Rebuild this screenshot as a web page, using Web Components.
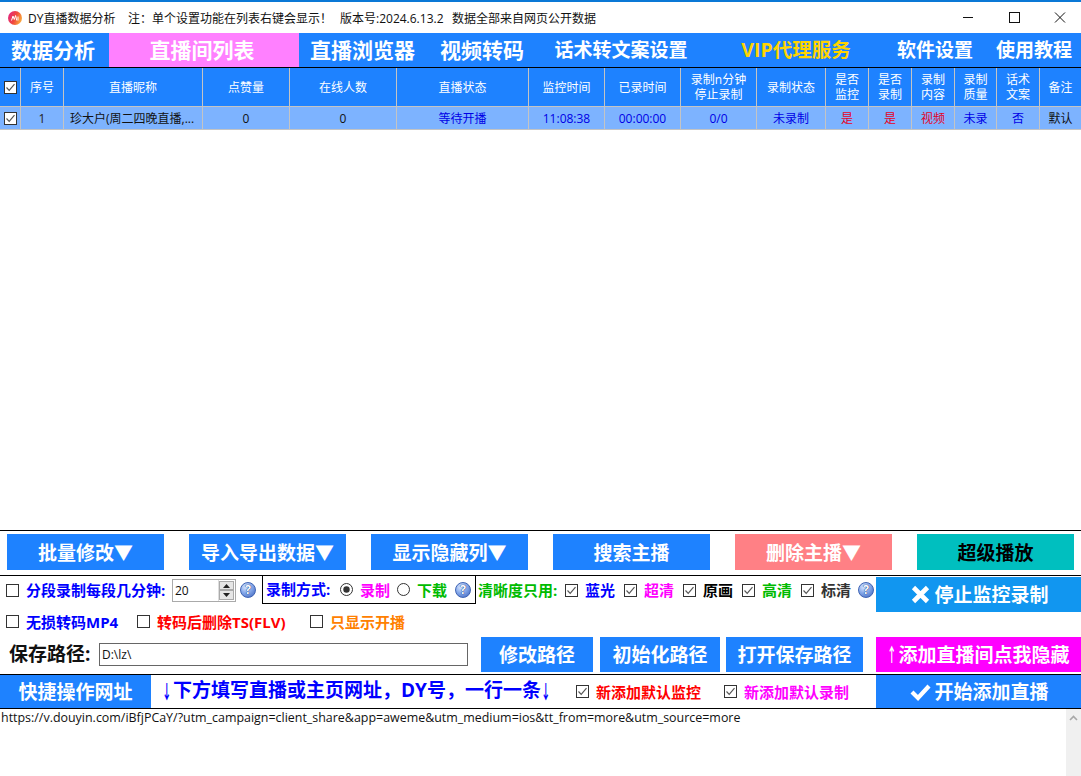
<!DOCTYPE html>
<html><head><meta charset="utf-8">
<style>
html,body{margin:0;padding:0;background:#fff}
body{width:1081px;height:776px;overflow:hidden;font-family:'Open Sans','Noto Sans CJK SC',sans-serif;font-size:12px;color:#111}
</style></head><body>
<dy-app></dy-app>
<script>
const FONT="'Open Sans','Noto Sans CJK SC',sans-serif";
function def(name,css,html){
  customElements.define(name,class extends HTMLElement{
    constructor(){super();const s=this.attachShadow({mode:'open'});
      s.innerHTML='<style>'+css+'</style>'+(typeof html==='function'?html(this):html);}
  });
}

def('dy-titlebar',`
:host{display:flex;align-items:center;border-top:2px solid #0a78d6;box-sizing:border-box;height:33px;background:#fff;font:12px ${FONT};color:#111;white-space:nowrap}
.logo{margin-left:8px;width:14px;height:14px;margin-right:6px;flex:none}
.a{width:100px}.b{width:212px}.c{width:112px}
.ctl{margin-left:auto;display:flex}
.ctl svg{display:block;width:46px;height:31px}
`,`
<svg class="logo" viewBox="0 0 14 14"><defs><linearGradient id="g" x1="0" y1="0" x2="1" y2="0.4"><stop offset="0" stop-color="#e0208c"/><stop offset=".6" stop-color="#f0483c"/><stop offset="1" stop-color="#f9a03c"/></linearGradient></defs><circle cx="7" cy="7" r="7" fill="url(#g)"/><path d="M3.5 9.5 L5 5 L6.3 8.5 L7.6 4.5 L8.8 9.5 M10 5.5 V9.5" stroke="#fff" stroke-width="1" fill="none"/></svg>
<span class="a">DY直播数据分析</span><span class="b">注：单个设置功能在列表右键会显示！</span><span class="c">版本号:2024.6.13.2</span><span>数据全部来自网页公开数据</span>
<div class="ctl">
<svg viewBox="0 0 46 31"><path d="M20 15.5H30" stroke="#111" stroke-width="1"/></svg>
<svg viewBox="0 0 46 31"><rect x="20.5" y="10.5" width="10" height="10" fill="none" stroke="#111"/></svg>
<svg viewBox="0 0 46 31"><path d="M20 10.5L30 20.5M30 10.5L20 20.5" stroke="#111" stroke-width="1" fill="none"/></svg>
</div>`);

def('dy-tabs',`:host{display:flex;height:34px;background:#1e82ff;border-bottom:1px solid #000}`,`<slot></slot>`);
def('dy-tab',`
:host{display:flex;align-items:center;justify-content:center;height:34px;font:bold var(--fs,20px)/1 ${FONT};color:var(--tfg,#fff);background:var(--tbg,transparent);white-space:nowrap;flex:none;box-sizing:border-box}
`,`<slot></slot>`);

const COLS='21px 43px 139px 87px 107px 132px 76px 76px 76px 69px 43px 43px 43px 42px 43px 41px';
def('dy-table',`:host{display:block}`,`<slot></slot>`);
def('dy-row',`
:host{display:grid;grid-template-columns:${COLS};background:var(--rowbg);height:var(--rowh);box-sizing:border-box;border-bottom:1px solid #c4c4c4}
`,`<slot></slot>`);
def('dy-cell',`
:host{display:flex;align-items:center;justify-content:center;text-align:center;font:12px/15px ${FONT};color:var(--fg,inherit);border-right:1px solid #c4c4c4;box-sizing:border-box;overflow:hidden;white-space:nowrap}
:host([left]){justify-content:flex-start;padding-left:6px}
:host(:last-child){border-right:0}
`,`<slot></slot>`);

def('dy-check',`
:host{display:inline-flex;align-items:center;flex:none;font:bold 15px/18px ${FONT};color:var(--fg,#111);white-space:nowrap}
svg{width:13px;height:13px;flex:none;display:block}
.t{margin-left:var(--lg,7px);width:var(--lw,auto)}
`,h=>{
  const on=h.hasAttribute('checked');
  return `<svg viewBox="0 0 13 13"><rect x=".5" y=".5" width="12" height="12" fill="#fff" stroke="#333"/>${on?'<path d="M2.5 6.5L5.2 9.3L10.5 3.2" fill="none" stroke="#555" stroke-width="1.2"/>':''}</svg><span class="t"><slot></slot></span>`;
});
def('dy-radio',`
:host{display:inline-flex;align-items:center;flex:none;font:bold 15px/18px ${FONT};color:var(--fg,#111);white-space:nowrap}
svg{width:13px;height:13px;flex:none;display:block}
.t{margin-left:7px}
`,h=>`<svg viewBox="0 0 13 13"><circle cx="6.5" cy="6.5" r="6" fill="#fff" stroke="#333"/>${h.hasAttribute('checked')?'<circle cx="6.5" cy="6.5" r="3.2" fill="#333"/>':''}</svg><span class="t"><slot></slot></span>`);

def('dy-help',`
:host{display:inline-flex;flex:none;width:16px;height:16px}
.i{width:16px;height:16px;border-radius:50%;border:1px solid #3f64b4;box-sizing:border-box;background:radial-gradient(circle at 35% 28%,#dfeaff 0,#86a9ea 45%,#3a60ba 100%);color:#fff;font:bold 12px/14px ${FONT};text-align:center;text-shadow:0 0 1px #12357f,0 0 1px #12357f}
`,`<div class="i">?</div>`);

def('dy-btn',`
:host{display:flex;align-items:center;justify-content:center;flex:none;width:var(--wd,157px);height:var(--ht,36px);background:var(--bg,#1e82ff);color:var(--btfg,#fff);font:bold var(--bfs,19px)/1 ${FONT};white-space:nowrap;box-sizing:border-box;padding-top:2px}
svg{display:none;width:21px;height:21px;margin:-2px 3px 0 2px;flex:none}
:host([icon]) svg.s{display:block}
`,h=>{
  const i=h.getAttribute('icon');
  const p=i==='x'?'<path d="M3.5 3.5L17.5 17.5M17.5 3.5L3.5 17.5" stroke="#fff" stroke-width="4.6" fill="none"/>':i==='ok'?'<path d="M2 11L8 17L19 5" stroke="#fff" stroke-width="4.2" fill="none"/>':'';
  return `<svg class="s" viewBox="0 0 21 21">${p}</svg><slot></slot>`;
});

def('dy-spin',`
:host{display:flex;flex:none;width:64px;height:23px;border:1px solid #aaa;box-sizing:border-box;background:#fff;font:12px/21px ${FONT};color:#111;padding-left:2px}
.t{flex:1}
.b{width:15px;display:flex;flex-direction:column;border-left:1px solid #ddd;padding:1px 1px 1px 0}
.b i{flex:1;background:#e6e6e6;border:1px solid #aaa;position:relative;display:block}
.b svg{position:absolute;left:3px;top:2px;width:7px;height:4px}
`,`<span class="t"><slot></slot></span><div class="b"><i><svg viewBox="0 0 7 4"><path d="M3.5 0L7 4H0z" fill="#222"/></svg></i><i><svg viewBox="0 0 7 4"><path d="M0 0H7L3.5 4z" fill="#222"/></svg></i></div>`);

def('dy-flow',`
:host{display:flex;align-items:center;box-sizing:border-box;background:#fff;height:var(--fh,auto);padding-left:var(--fp,0)}
:host([top]){align-items:flex-start}
`,`<slot></slot>`);
def('dy-modebox',`
:host{display:flex;align-items:center;flex:none;width:214px;height:28px;border:1px solid #000;border-top:0;box-sizing:border-box;padding-left:3px;font:bold 15px/18px ${FONT};color:#0000ff;white-space:nowrap}
`,`<slot></slot>`);
def('dy-path',`
:host{display:block;flex:none;width:369px;height:23px;border:1px solid #666;box-sizing:border-box;font:12px/21px ${FONT};color:#111;padding-left:2px;background:#fff}
`,`<slot></slot>`);
def('dy-urlbox',`
:host{display:flex;height:67px;font:12.45px/17px ${FONT};color:#111;background:#fff;white-space:nowrap}
.t{flex:1;padding-left:1px;overflow:hidden}
.sb{width:15px;background:#f0f0f0;display:flex;justify-content:center;padding-top:6px;box-sizing:border-box}
.sb svg{width:9px;height:6px}
`,`<div class="t"><slot></slot></div><div class="sb"><svg viewBox="0 0 9 6"><path d="M1 5L4.5 1.5L8 5" fill="none" stroke="#a8a8a8" stroke-width="1.6"/></svg></div>`);
def('dy-gap',`:host{display:block;flex:none;width:var(--w,0)}`,``);
def('dy-arrow',`
:host{display:inline-block;width:11px;height:1em;flex:none;vertical-align:-0.1em}
span{display:inline-block;font-weight:700;line-height:1em;transform:scaleX(.5);transform-origin:0 50%;white-space:nowrap}
`,`<span><slot></slot></span>`);

const tab=(w,t,st='')=>`<dy-tab style="width:${w}px;${st}">${t}</dy-tab>`;
const c=(t,st='',a='')=>`<dy-cell ${a} style="${st}">${t}</dy-cell>`;
const g=w=>`<dy-gap style="--w:${w}px"></dy-gap>`;
const arr=ch=>`<dy-arrow>${ch}</dy-arrow>`;
const hdr=['序号','直播昵称','点赞量','在线人数','直播状态','监控时间','已录时间','录制n分钟<br>停止录制','录制状态','是否<br>监控','是否<br>录制','录制<br>内容','录制<br>质量','话术<br>文案','备注'];
const bl='--fg:#0000e6',rd='--fg:#e60026';
const row=[['1','--fg:#222'],['珍大户(周二四晚直播,...','--fg:#111','left'],['0','--fg:#111'],['0','--fg:#111'],['等待开播',bl],['11:08:38',bl],['00:00:00',bl],['0/0',bl],['未录制',bl],['是',rd],['是',rd],['视频',rd],['未录',bl],['否',bl],['默认','--fg:#111']];
const box='<dy-check checked style="--lg:0"></dy-check>';
const qc=(t,col,ml)=>g(ml)+`<dy-check checked style="--fg:${col}">${t}</dy-check>`;
const lbl=(t,col,w,fs=15)=>`<span style="font:bold ${fs}px/1 ${FONT};color:${col};white-space:nowrap;display:block;flex:none;width:${w}px">${t}</span>`;
def('dy-app',`
:host{display:flex;flex-direction:column;width:1081px;height:776px;background:#fff}
.sp{flex:1}
.rule{border-top:1px solid #000}
.opts{display:flex}
.optl{flex:none;width:876px}
`,`
<dy-titlebar></dy-titlebar>
<dy-tabs>
${tab(109,'数据分析','--fs:21px;padding-right:3px')}${tab(190,'直播间列表','--fs:21px;--tbg:#ff80ff;padding-right:4px')}
${tab(127,'直播浏览器','--fs:21px')}${tab(112,'视频转码','--fs:21px')}${tab(166,'话术转文案设置','--fs:19px')}
${tab(184,'VIP代理服务','--fs:19.5px;--tfg:#ffd400')}${tab(94,'软件设置','--fs:19px')}${tab(99,'使用教程','--fs:19px;padding-left:5px')}
</dy-tabs>
<dy-table>
<dy-row style="--rowbg:#1e82ff;--rowh:39px;--fg:#fff">${c(box)}${hdr.map(h=>c(h)).join('')}</dy-row>
<dy-row style="--rowbg:#7db3ff;--rowh:23px">${c(box)}${row.map(r=>c(r[0],r[1],r[2]||'')).join('')}</dy-row>
</dy-table>
<div class="sp"></div>

<dy-flow class="rule" top style="--fh:45px;--fp:7px;padding-top:3px;gap:25px">
<dy-btn>批量修改▼</dy-btn><dy-btn>导入导出数据▼</dy-btn><dy-btn>显示隐藏列▼</dy-btn><dy-btn>搜索主播</dy-btn><dy-btn style="--bg:#ff8085">删除主播▼</dy-btn><dy-btn style="--bg:#00bfbf;--btfg:#000">超级播放</dy-btn>
</dy-flow>

<div class="opts rule">
 <div class="optl">
  <dy-flow top style="--fh:30px;--fp:6px">
    <dy-flow style="--fh:28px;--fp:0">
      <dy-check style="--fg:#0000ff;--lw:142px">分段录制每段几分钟:</dy-check>${g(4)}<dy-spin>20</dy-spin>${g(4)}<dy-help></dy-help>${g(6)}
    </dy-flow>
    <dy-modebox>${lbl('录制方式:','#0000ff',74)}<dy-radio checked style="--fg:#ff00ff">录制</dy-radio>${g(7)}<dy-radio style="--fg:#00bb00">下载</dy-radio>${g(8)}<dy-help></dy-help></dy-modebox>
    <dy-flow style="--fh:28px;--fp:0">
      ${g(2)}${lbl('清晰度只用:','#00bb00',87)}${qc('蓝光','#0000ff',0)}${qc('超清','#ff00ff',9)}${qc('原画','#000',9)}${qc('高清','#00bb00',9)}${qc('标清','#333',9)}${g(7)}<dy-help></dy-help>
    </dy-flow>
  </dy-flow>
  <dy-flow style="--fh:31px;--fp:6px">
    <dy-check style="--fg:#0000ff;--lw:94px">无损转码MP4</dy-check>${g(17)}<dy-check style="--fg:#ff0000;--lw:133px">转码后删除TS(FLV)</dy-check>${g(20)}<dy-check style="--fg:#ff8000">只显示开播</dy-check>
  </dy-flow>
 </div>
 <dy-btn icon="x" style="--wd:205px;--ht:35px;--bg:#1196f0;margin-top:1px">停止监控录制</dy-btn>
</div>

<dy-flow top style="--fh:37px;--fp:9px">
  <dy-flow style="--fh:35px;--fp:0">${lbl('保存路径:','#111',90,19)}<dy-path>D:\\lz\\</dy-path></dy-flow>${g(13)}
  <dy-btn style="--wd:112px;--ht:35px">修改路径</dy-btn>${g(7)}
  <dy-btn style="--wd:120px;--ht:35px">初始化路径</dy-btn>${g(6)}
  <dy-btn style="--wd:137px;--ht:35px">打开保存路径</dy-btn>${g(13)}
  <dy-btn style="--wd:205px;--ht:35px;--bg:#ff00ff">${arr('↑')}添加直播间点我隐藏</dy-btn>
</dy-flow>

<dy-flow class="rule" style="--fh:35px;border-bottom:1px solid #000">
  <dy-btn style="--wd:151px;--ht:33px">快捷操作网址</dy-btn>${g(11)}
  ${lbl(arr('↓')+'下方填写直播或主页网址，DY号，一行一条'+arr('↓'),'#0000ff',403,19)}${g(11)}
  <dy-check checked style="--fg:#ff0000;--lw:105px">新添加默认监控</dy-check>${g(23)}
  <dy-check checked style="--fg:#ff00ff;--lw:105px">新添加默认录制</dy-check>${g(27)}
  <dy-btn icon="ok" style="--wd:205px;--ht:33px">开始添加直播</dy-btn>
</dy-flow>

<dy-urlbox>https://v.douyin.com/iBfjPCaY/?utm_campaign=client_share&amp;app=aweme&amp;utm_medium=ios&amp;tt_from=more&amp;utm_source=more</dy-urlbox>
`);
</script>
</body></html>
